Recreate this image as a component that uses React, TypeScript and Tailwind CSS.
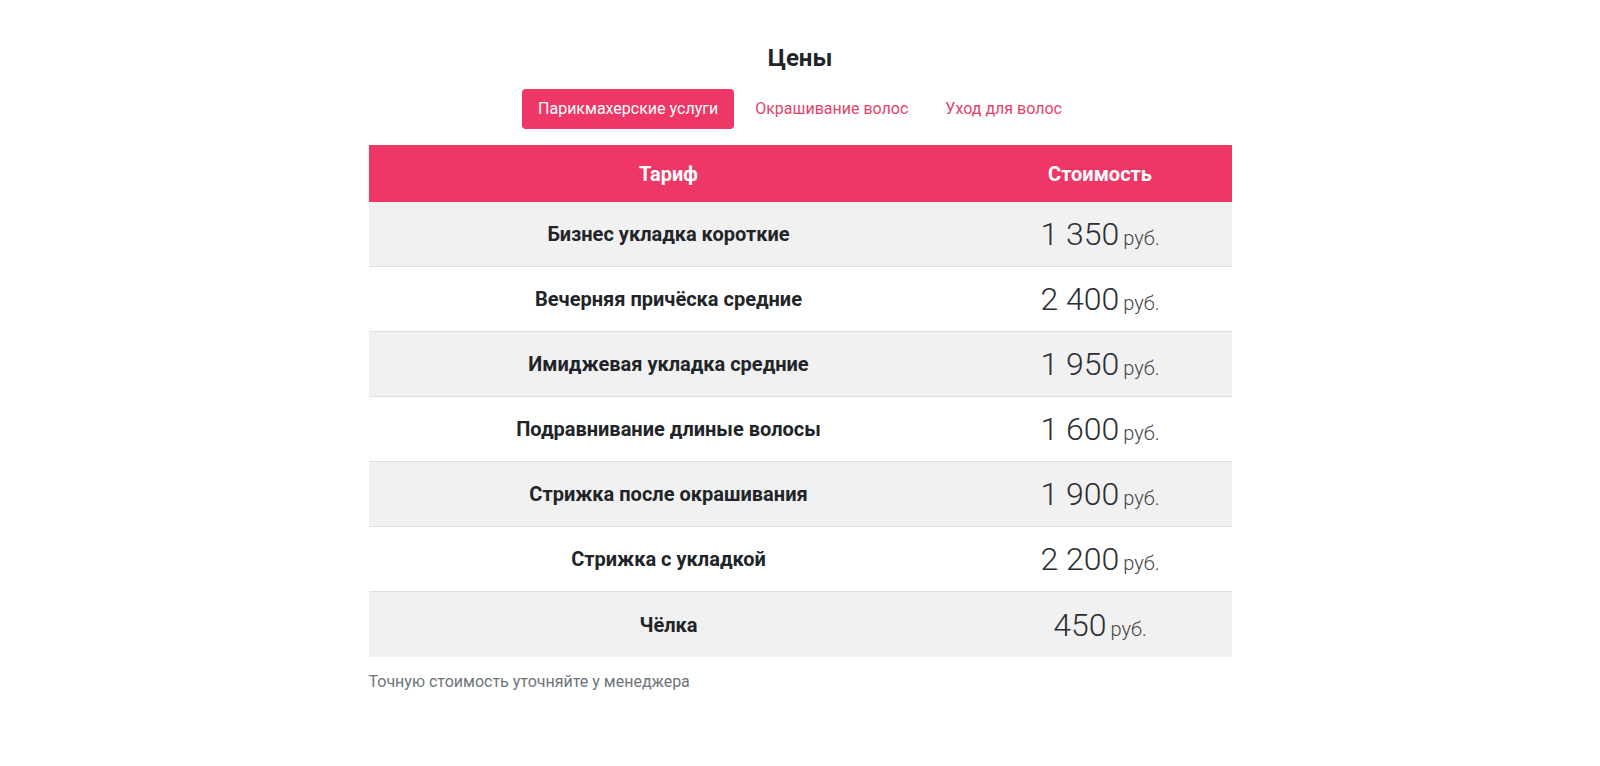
import React, { useState } from 'react';

const TABS = ['Парикмахерские услуги', 'Окрашивание волос', 'Уход для волос'];

const PRICES: { name: string; price: string }[] = [
  { name: 'Бизнес укладка короткие', price: '1 350' },
  { name: 'Вечерняя причёска средние', price: '2 400' },
  { name: 'Имиджевая укладка средние', price: '1 950' },
  { name: 'Подравнивание длиные волосы', price: '1 600' },
  { name: 'Стрижка после окрашивания', price: '1 900' },
  { name: 'Стрижка с укладкой', price: '2 200' },
  { name: 'Чёлка', price: '450' },
];

const App: React.FC = () => {
  const [active, setActive] = useState(0);

  return (
    <div className="min-h-[766px] bg-white font-['Roboto','Liberation_Sans',sans-serif] text-[#212529]">
      <div className="w-[863px] mx-auto pt-[44px]">
        <h2 className="text-center text-[24px] font-bold leading-[28px]">Цены</h2>

        <div className="flex justify-center gap-[5px] mt-[17px]">
          {TABS.map((tab, i) => (
            <button
              key={tab}
              onClick={() => setActive(i)}
              className={
                i === active
                  ? 'h-10 px-4 rounded-[4px] bg-[#ee3766] text-white text-[16px]'
                  : 'h-10 px-4 rounded-[4px] text-[#e3436a] text-[16px]'
              }
            >
              {tab}
            </button>
          ))}
        </div>

        <div className="mt-4">
          <div className="flex h-[57px] items-center bg-[#ee3766] text-white text-[20px] font-bold">
            <div className="w-[600px] text-center">Тариф</div>
            <div className="flex-1 text-center">Стоимость</div>
          </div>
          {PRICES.map((row, i) => (
            <div
              key={row.name}
              className={
                'flex h-[65px] items-center ' +
                (i % 2 === 0 ? 'bg-[#f1f1f1] ' : 'bg-white ') +
                (i < PRICES.length - 1 ? 'border-b border-[#dedede]' : '')
              }
            >
              <div className="w-[600px] text-center text-[20px] font-bold">{row.name}</div>
              <div className="flex-1 text-center">
                <span className="text-[32px] font-light text-[#2b2f33]">{row.price}</span>
                <span className="ml-[4px] text-[20px] font-light text-[#444]">руб.</span>
              </div>
            </div>
          ))}
        </div>

        <p className="mt-[13px] text-[16px] leading-6 text-[#6c757d]">Точную стоимость уточняйте у менеджера</p>
      </div>
    </div>
  );
};

export default App;
